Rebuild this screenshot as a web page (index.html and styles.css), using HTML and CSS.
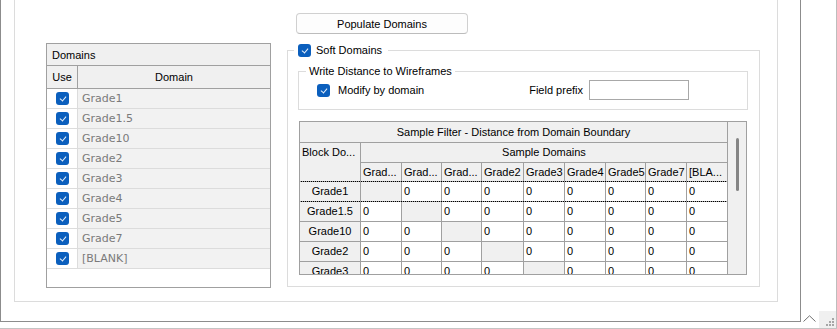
FILE: index.html
```html
<!DOCTYPE html>
<html lang="en">
<head>
  <meta charset="UTF-8" />
  <title>Domains</title>
  <link rel="stylesheet" href="styles.css">
</head>
<body>

  <div class="screen">
    <div class="frame">
      <div class="page">

        <!-- Domain list -->
        <div class="domains">
          <div class="domains-title">Domains</div>
          <div class="domains-head">
            <div class="col-use">Use</div>
            <div class="col-name">Domain</div>
          </div>
          <div class="domains-row"><div class="col-use"><span class="chk"></span></div><div class="col-name">Grade1</div></div>
          <div class="domains-row"><div class="col-use"><span class="chk"></span></div><div class="col-name">Grade1.5</div></div>
          <div class="domains-row"><div class="col-use"><span class="chk"></span></div><div class="col-name">Grade10</div></div>
          <div class="domains-row"><div class="col-use"><span class="chk"></span></div><div class="col-name">Grade2</div></div>
          <div class="domains-row"><div class="col-use"><span class="chk"></span></div><div class="col-name">Grade3</div></div>
          <div class="domains-row"><div class="col-use"><span class="chk"></span></div><div class="col-name">Grade4</div></div>
          <div class="domains-row"><div class="col-use"><span class="chk"></span></div><div class="col-name">Grade5</div></div>
          <div class="domains-row"><div class="col-use"><span class="chk"></span></div><div class="col-name">Grade7</div></div>
          <div class="domains-row"><div class="col-use"><span class="chk"></span></div><div class="col-name">[BLANK]</div></div>
        </div>

        <!-- Options -->
        <div class="options">
          <button class="btn" type="button">Populate Domains</button>

          <fieldset class="group soft">
            <legend class="soft-legend"><span class="chk"></span>Soft Domains</legend>

            <fieldset class="group write">
              <legend class="write-legend">Write Distance to Wireframes</legend>
              <div class="write-row">
                <span class="chk"></span>
                <span class="lbl">Modify by domain</span>
                <span class="prefix">Field prefix</span>
                <input class="prefix-input" type="text" />
              </div>
            </fieldset>

            <div class="matrix">
              <div class="matrix-main">
                <div class="matrix-head">
                  <div class="mh mh-title">Sample Filter - Distance from Domain Boundary</div>
                  <div class="mh mh-block">Block Do...</div>
                  <div class="mh mh-sample">Sample Domains</div>
                  <div class="mh">Grad...</div>
                  <div class="mh">Grad...</div>
                  <div class="mh">Grad...</div>
                  <div class="mh">Grade2</div>
                  <div class="mh">Grade3</div>
                  <div class="mh">Grade4</div>
                  <div class="mh">Grade5</div>
                  <div class="mh">Grade7</div>
                  <div class="mh">[BLA...</div>
                </div>

                <div class="mrow focus">
                  <div class="rh">Grade1</div>
                  <div class="mc diag"></div><div class="mc">0</div><div class="mc">0</div><div class="mc">0</div><div class="mc">0</div><div class="mc">0</div><div class="mc">0</div><div class="mc">0</div><div class="mc">0</div>
                </div>
                <div class="mrow">
                  <div class="rh">Grade1.5</div>
                  <div class="mc">0</div><div class="mc diag"></div><div class="mc">0</div><div class="mc">0</div><div class="mc">0</div><div class="mc">0</div><div class="mc">0</div><div class="mc">0</div><div class="mc">0</div>
                </div>
                <div class="mrow">
                  <div class="rh">Grade10</div>
                  <div class="mc">0</div><div class="mc">0</div><div class="mc diag"></div><div class="mc">0</div><div class="mc">0</div><div class="mc">0</div><div class="mc">0</div><div class="mc">0</div><div class="mc">0</div>
                </div>
                <div class="mrow">
                  <div class="rh">Grade2</div>
                  <div class="mc">0</div><div class="mc">0</div><div class="mc">0</div><div class="mc diag"></div><div class="mc">0</div><div class="mc">0</div><div class="mc">0</div><div class="mc">0</div><div class="mc">0</div>
                </div>
                <div class="mrow">
                  <div class="rh">Grade3</div>
                  <div class="mc">0</div><div class="mc">0</div><div class="mc">0</div><div class="mc">0</div><div class="mc diag"></div><div class="mc">0</div><div class="mc">0</div><div class="mc">0</div><div class="mc">0</div>
                </div>
              </div>
              <div class="vscroll"><span class="thumb"></span></div>
            </div>
          </fieldset>
        </div>

      </div>
    </div>

    <div class="side">
      <svg class="caret" width="13" height="7" viewBox="0 0 13 7">
        <path d="M0.5 6.5 L6.5 0.8 L12.5 6.5" fill="none" stroke="#707070" stroke-width="1" />
      </svg>
      <div class="grip">
        <svg width="17" height="17" viewBox="0 0 17 17">
          <rect x="13" y="7" width="2" height="2" fill="#a6a6a6" />
          <rect x="10" y="10" width="2" height="2" fill="#a6a6a6" />
          <rect x="13" y="10" width="2" height="2" fill="#a6a6a6" />
          <rect x="7" y="13" width="2" height="2" fill="#a6a6a6" />
          <rect x="10" y="13" width="2" height="2" fill="#a6a6a6" />
          <rect x="13" y="13" width="2" height="2" fill="#a6a6a6" />
        </svg>
      </div>
    </div>
  </div>

</body>
</html>
```

FILE: styles.css
```css
* {
  box-sizing: border-box;
}

body {
  margin: 0;
  background: #fff;
  font-family: "Segoe UI", "Liberation Sans", Arial, sans-serif;
  font-size: 11px;
  color: #000;
}

.screen {
  display: flex;
  width: 837px;
  height: 329px;
  border-bottom: 1px solid #c4c4c4;
  overflow: hidden;
}

.frame {
  flex-shrink: 0;
  width: 801px;
  height: 322px;
  border: 1px solid #8c8c8c;
  border-top: 0;
  padding: 0 22px 19px 13px;
}

.page {
  height: 100%;
  border: 1px solid #dcdcdc;
  border-top: 0;
  display: flex;
  align-items: flex-start;
  gap: 16px;
  padding-left: 31px;
}

/* checkbox */
.chk {
  flex-shrink: 0;
  position: relative;
  display: inline-block;
  width: 13px;
  height: 13px;
  border-radius: 3px;
  background: #0b5fbd;
}

.chk::after {
  content: "";
  position: absolute;
  left: 5px;
  top: 3px;
  width: 3px;
  height: 5px;
  border: solid #e8f0fa;
  border-width: 0 1px 1px 0;
  transform: rotate(40deg);
}

/* domain list */
.domains {
  margin-top: 43px;
  width: 225px;
  height: 245px;
  border: 1px solid #a0a0a0;
  background: #fff;
}

.domains-title {
  height: 22px;
  display: flex;
  align-items: center;
  padding-left: 5px;
  background: #f0f0f0;
  border-bottom: 1px solid #a0a0a0;
}

.domains-head {
  display: flex;
  height: 23px;
  background: #f0f0f0;
  border-bottom: 1px solid #a0a0a0;
}

.domains-head .col-use {
  width: 31px;
  border-right: 1px solid #a0a0a0;
  display: flex;
  align-items: center;
  justify-content: center;
}

.domains-head .col-name {
  flex: 1;
  display: flex;
  align-items: center;
  justify-content: center;
}

.domains-row {
  display: flex;
  height: 20px;
  border-bottom: 1px solid #dcdcdc;
}

.domains-row .col-use {
  width: 31px;
  border-right: 1px solid #dcdcdc;
  display: flex;
  align-items: center;
  justify-content: center;
}

.domains-row .col-name {
  flex: 1;
  display: flex;
  align-items: center;
  padding-left: 4px;
  background: #f2f2f2;
  font-family: "DejaVu Sans", Verdana, sans-serif;
  font-size: 11px;
  color: #7a7a7a;
}

/* options side */
.options {
  width: 473px;
  display: flex;
  flex-direction: column;
  align-items: flex-start;
}

.btn {
  margin: 13px 0 0 9px;
  width: 172px;
  height: 21px;
  padding: 0;
  border: 1px solid #d0d0d0;
  border-bottom-color: #bcbcbc;
  border-radius: 4px;
  background: #fdfdfd;
  font: inherit;
  color: #000;
}

.group {
  margin: 0;
  padding: 0;
  min-width: 0;
  border: 1px solid #dcdcdc;
}

.group legend {
  height: 14px;
  display: flex;
  align-items: center;
  line-height: 14px;
}

.soft {
  margin-top: 9px;
  width: 473px;
}

.soft-legend {
  gap: 5px;
  margin-left: 6px;
  padding: 0 6px 0 4px;
}

.write {
  margin: 7px 11px 0 10px;
}

.write-legend {
  margin-left: 7px;
  padding: 0 3px;
}

.write-row {
  display: flex;
  align-items: center;
  height: 31px;
  padding: 2px 58px 9px 18px;
}

.lbl {
  margin-left: 8px;
}

.prefix {
  margin-left: auto;
}

.prefix-input {
  margin: 0 0 0 6px;
  width: 100px;
  height: 20px;
  border: 1px solid #a8a8a8;
  background: #fff;
  padding: 0 2px;
  font: inherit;
}

/* sample filter matrix */
.matrix {
  display: flex;
  height: 154px;
  margin: 11px 12px 11px 11px;
  border: 1px solid #a0a0a0;
}

.matrix-main {
  width: 427px;
  display: flex;
  flex-direction: column;
  gap: 1px;
  background: #a0a0a0;
  overflow: hidden;
}

.matrix-head,
.mrow {
  display: grid;
  grid-template-columns: 60px 40px 39px 39px 41px 40px 40px 39px 40px 40px;
  gap: 1px;
}

.matrix-head {
  grid-template-rows: 20px 19px 18px;
}

.mrow {
  flex-shrink: 0;
  height: 19px;
}

.mh {
  background: #f0f0f0;
  padding-left: 2px;
  line-height: 18px;
  white-space: nowrap;
  overflow: hidden;
}

.mh-title {
  grid-column: 1 / -1;
  text-align: center;
  line-height: 20px;
  padding: 0;
}

.mh-block {
  grid-row: 2 / 4;
  line-height: 19px;
  padding-left: 2px;
}

.mh-sample {
  grid-column: 2 / -1;
  text-align: center;
  line-height: 19px;
  padding: 0;
}

.rh {
  background: #f0f0f0;
  text-align: center;
  line-height: 19px;
}

.mc {
  background: #fff;
  padding-left: 2px;
  line-height: 19px;
}

.diag {
  background: #f0f0f0;
}

.focus {
  outline: 1px dotted #000;
}

.vscroll {
  width: 19px;
  border-left: 1px solid #a0a0a0;
  background: #f0f0f0;
  padding: 16px 0 0 8px;
}

.thumb {
  display: block;
  width: 3px;
  height: 53px;
  border-radius: 2px;
  background: #858585;
}

/* window edge */
.side {
  flex: 1;
  display: flex;
  align-items: flex-end;
  border-right: 1px solid #bdbdbd;
}

.caret {
  margin: 0 0 6px 2px;
}

.grip {
  margin-left: auto;
  width: 17px;
  height: 17px;
  background: #f0f0f0;
}

.grip svg {
  display: block;
}
```
